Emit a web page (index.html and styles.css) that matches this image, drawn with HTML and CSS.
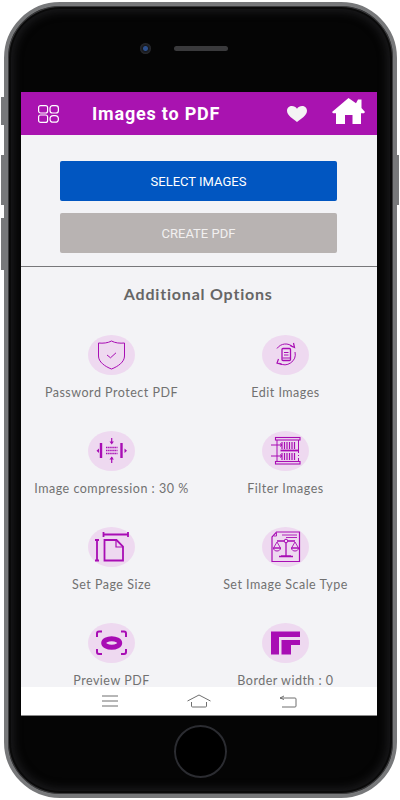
FILE: index.html
```html
<!DOCTYPE html>
<html lang="en">
<head>
  <meta charset="UTF-8" />
  <meta name="viewport" content="width=device-width, initial-scale=1.0" />
  <title>Images to PDF</title>
  <link rel="stylesheet" href="styles.css">
</head>
<body>
  <div class="phone">
    <span class="side-btn side-mute"></span>
    <span class="side-btn side-up"></span>
    <span class="side-btn side-down"></span>
    <span class="side-btn side-power"></span>

    <div class="top-bezel">
      <span class="camera"></span>
      <span class="speaker"></span>
    </div>

    <div class="screen">
      <header class="app-bar">
        <svg class="menu-icon" width="21" height="18" viewBox="0 0 21 18" fill="none" stroke="#fff" stroke-width="1.2">
          <rect x="0.6" y="0.6" width="9" height="7.4" rx="2"/>
          <rect x="12" y="0.6" width="8.4" height="7.4" rx="2.6"/>
          <rect x="0.6" y="10" width="9" height="7.4" rx="2"/>
          <rect x="12" y="10.6" width="8.4" height="6.6" rx="3.3"/>
        </svg>
        <h1 class="app-title">Images to PDF</h1>
        <svg class="heart-icon" width="20" height="16" viewBox="0 0 20 16"><path fill="#f4f4f4" d="M10 16C6 13 0 9.600 0 4.800 0 1.800 2.300 0 4.900 0 7 0 8.900 1 10 2.800 11.100 1 13 0 15.100 0 17.700 0 20 1.800 20 4.800 20 9.600 14 13 10 16Z"/></svg>
        <svg class="home-icon" width="33" height="26" viewBox="0 0 33 26"><path fill="#fff" d="M16.500 0 24 5.200 26 1.500H29.500V10L33 14 32 15.200H29V26H20.500V17H13V26H4V15.200H1L0 14Z"/></svg>
      </header>

      <main class="content">
        <button class="btn btn-blue" type="button">SELECT IMAGES</button>
        <button class="btn btn-grey" type="button">CREATE PDF</button>
        <hr class="divider">
        <h2 class="section-title">Additional Options</h2>

        <div class="options">
          <div class="option">
            <svg class="opt-icon" viewBox="0 0 47 40" fill="none" stroke="#a80db4" stroke-width="1">
              <path d="M10.500 8C15 8.500 20 8 23.500 6 27 8 32 8.500 36.500 8V21C36.500 27 30 31.500 23.500 34 17 31.500 10.500 27 10.500 21Z"/>
              <path d="M19 20l3.500 2.800 5.500-5"/>
            </svg>
            <span class="opt-label">Password Protect PDF</span>
          </div>
          <div class="option">
            <svg class="opt-icon" viewBox="0 0 47 40" fill="none" stroke="#a80db4" stroke-width="1">
              <path d="M15 13.500A10.500 10.500 0 0 1 31 12M33 17A10.500 10.500 0 0 1 17 28" stroke-dasharray="24 1.500"/>
              <path d="M28 10.500l4.500 2-1 -4.500M20 29.500l-5-1.500 1.500 -4" stroke-width="1.200"/>
              <rect x="20" y="13.500" width="8.500" height="12" rx="1" stroke-width="1.300"/>
              <path d="M22 17.500h4.500M22 20h4.500M20.500 23h7.500"/>
            </svg>
            <span class="opt-label">Edit Images</span>
          </div>
          <div class="option">
            <svg class="opt-icon" viewBox="0 0 47 40" fill="none" stroke="#a80db4" stroke-width="1">
              <path d="M23.700 7v5M23.700 26v6" stroke-width="1.200"/>
              <path fill="#a80db4" stroke="none" d="M21.500 10.500h4.400l-2.200 3ZM21.500 28.500h4.400l-2.200-3ZM11 17.500v4.400l-2.500-2.200ZM36.500 17.500v4.400l2.500-2.200Z"/>
              <path d="M13 12v15M33.500 12v15" stroke-width="2.400"/>
              <path d="M18 16.500h11.500M18 19.500h11.500M18 22.500h11.500" stroke-width="1.700" stroke-dasharray="1.500 .6"/>
            </svg>
            <span class="opt-label">Image compression : 30 %</span>
          </div>
          <div class="option">
            <svg class="opt-icon" viewBox="0 0 47 40" fill="none" stroke="#a80db4" stroke-width="1">
              <rect x="13.500" y="6.500" width="24.500" height="2.500" stroke-width="1.100"/>
              <rect x="13.500" y="30.500" width="24.500" height="2.500" stroke-width="1.100"/>
              <path d="M15 9v21.500M36.500 9v13M36.500 24v1M36.500 27v3.500"/>
              <path d="M18.500 19.500h18" stroke-width="1.800"/>
              <path d="M20 11v7M22.500 11v7M25 11v7M27.500 11v7M30 11v7M32.500 11v7M20 22v7M22.500 22v7M25 22v7M27.500 22v7M30 22v7M32.500 22v7" stroke-width="1.200"/>
              <path d="M9 14h10.500M9 25h10.500"/>
              <path d="M18 12.500l2 1.500-2 1.500M18 23.500l2 1.500-2 1.500"/>
            </svg>
            <span class="opt-label">Filter Images</span>
          </div>
          <div class="option">
            <svg class="opt-icon" viewBox="0 0 47 40" fill="none" stroke="#a80db4" stroke-width="1.800">
              <path d="M15.500 7.500h24.500M15.500 5v5M40 5v5"/>
              <path d="M9 13v20.500M7 13h4M7 33.500h4"/>
              <path d="M16.500 13h12l6.500 6.500v14h-18.500Z"/>
              <path d="M28 13v7h7" stroke-width="1.200"/>
            </svg>
            <span class="opt-label">Set Page Size</span>
          </div>
          <div class="option">
            <svg class="opt-icon" viewBox="0 0 47 40" fill="none" stroke="#a80db4" stroke-width="1">
              <path d="M14.500 5h23V34.500H10V10Z" stroke-width="1.200"/>
              <path d="M12 9h2.500V6M20 8h15M24 10.500h11" stroke-width=".9"/>
              <path d="M24 15v14M19 29h10M17 29.500h14M15 14h18" stroke-width="1.300"/>
              <circle cx="24" cy="14" r="1.800" fill="#eed9f0"/>
              <path d="M15 15l-3.500 6h7ZM33 15l-3.500 6h7Z" stroke-width=".9"/>
              <path d="M11.500 21c0 4 7 4 7 0ZM29.500 21c0 4 7 4 7 0Z" stroke-width="1"/>
            </svg>
            <span class="opt-label">Set Image Scale Type</span>
          </div>
          <div class="option">
            <svg class="opt-icon" viewBox="0 0 47 40" fill="none" stroke="#a80db4" stroke-width="2">
              <path d="M9 14v-3.500q0-2 2-2h3M33 8.500h3q2 0 2 2V14M38 26v3q0 2-2 2h-3M14 31h-3q-2 0-2-2v-3"/>
              <ellipse cx="23.700" cy="20" rx="8" ry="4.200" stroke-width="5"/>
            </svg>
            <span class="opt-label">Preview PDF</span>
          </div>
          <div class="option">
            <svg class="opt-icon" viewBox="0 0 47 40">
              <path fill="#a80db4" d="M9 8.500H38V14H17V31.500H9ZM19.500 17H38V22H29V31.500H19.500Z"/>
            </svg>
            <span class="opt-label">Border width : 0</span>
          </div>
        </div>
      </main>

      <nav class="nav-bar">
        <svg width="18" height="12" viewBox="0 0 18 12" fill="none" stroke="#6f6f6f" stroke-width="1"><path d="M1 1h16M1 6h16M1 11h16"/></svg>
        <svg width="24" height="14" viewBox="0 0 24 14" fill="none" stroke="#6f6f6f" stroke-width="1"><path d="M.5 7 12 1 23.500 7M4.500 8v4q0 1 1 1h13q1 0 1-1V8"/></svg>
        <svg width="18" height="13" viewBox="0 0 18 13" fill="none" stroke="#6f6f6f" stroke-width="1"><path d="M1 3h15q1 0 1 1v7q0 1-1 1H3M5 1 1 3l4 1.500"/></svg>
      </nav>
    </div>

    <div class="bottom-bezel">
      <span class="home-btn"></span>
    </div>
  </div>
</body>
</html>
```

FILE: styles.css
```css
* {
  box-sizing: border-box;
}

body {
  margin: 0;
  background: #fff;
  overflow: hidden;
  font-family: Lato, sans-serif;
}

/* device frame */
.phone {
  position: relative;
  display: flex;
  flex-direction: column;
  align-items: center;
  width: 393px;
  height: 796px;
  margin: 2px 3px 2px 4px;
  background: #050505;
  border: 4px solid #77787a;
  border-radius: 56px;
  box-shadow: inset 0 0 0 1px #3a3a3c, inset 0 0 0 3px #0a0a0a, inset 0 0 8px 6px #1a1a1c;
}

.side-btn {
  position: absolute;
  width: 3px;
  background: #77787a;
}

.side-mute { left: -7px; top: 91px; height: 28px; }
.side-up { left: -7px; top: 149px; height: 50px; }
.side-down { left: -7px; top: 212px; height: 52px; }
.side-power { right: -6px; top: 149px; height: 50px; }

.top-bezel {
  flex: none;
  display: flex;
  justify-content: center;
  align-items: center;
  gap: 23px;
  width: 100%;
  height: 86px;
  padding: 0 33px 1px 0;
}

.camera {
  width: 11px;
  height: 11px;
  border-radius: 50%;
  background: radial-gradient(circle, #2c4f8c 0 2px, #16181d 3px, #2b2c30 5.500px);
}

.speaker {
  width: 54px;
  height: 5px;
  border-radius: 3px;
  background: #3a3a3c;
}

/* app screen */
.screen {
  flex: none;
  display: flex;
  flex-direction: column;
  width: 356.500px;
  height: 624px;
  margin-right: 3.500px;
  background: #f3f3f6;
}

.app-bar {
  flex: none;
  display: flex;
  align-items: center;
  height: 43px;
  padding-left: 17.500px;
  background: #a913b0;
}

.app-title {
  margin: 0 0 0 33px;
  font-family: Roboto, sans-serif;
  font-size: 18px;
  font-weight: 700;
  letter-spacing: 0.8px;
  white-space: nowrap;
  color: #fff;
}

.heart-icon {
  margin-left: auto;
}

.home-icon {
  margin: -5px 12px 0 25px;
}

.content {
  flex: 1;
  min-height: 0;
  overflow: hidden;
  padding-top: 26px;
}

.btn {
  display: block;
  width: 277px;
  height: 40px;
  margin: 0 auto 12px 39.500px;
  border: none;
  border-radius: 2px;
  font-family: Roboto, sans-serif;
  font-size: 13px;
  color: #fff;
}

.btn-blue {
  background: #0156c1;
}

.btn-grey {
  background: #b8b3b2;
  color: #f2f0f0;
}

.divider {
  height: 1px;
  margin: 13px 0 0;
  border: none;
  background: #77777a;
}

.section-title {
  margin: 17px 0 0;
  padding-right: 1px;
  text-align: center;
  font-size: 16px;
  line-height: 20px;
  font-weight: 700;
  letter-spacing: 0.8px;
  color: #666;
}

.options {
  display: grid;
  grid-template-columns: 174px 174px;
  grid-auto-rows: 96px;
  padding: 31px 0 0 4px;
}

.option {
  display: flex;
  flex-direction: column;
  align-items: center;
}

.opt-icon {
  width: 47px;
  height: 40px;
  overflow: visible;
  border-radius: 50%;
  background: #eed9f0;
}

.opt-label {
  margin-top: 10px;
  font-size: 12.500px;
  line-height: 16px;
  letter-spacing: 0.5px;
  white-space: nowrap;
  color: #717171;
}

.nav-bar {
  flex: none;
  display: flex;
  justify-content: space-between;
  align-items: center;
  height: 29px;
  padding: 0 80px;
  background: #fff;
  border-bottom: 1px solid #8a8a8a;
}

.bottom-bezel {
  flex: 1;
  display: flex;
  justify-content: center;
  align-items: center;
  width: 100%;
  padding: 0 0 8px;
}

.home-btn {
  width: 53px;
  height: 53px;
  border: 2px solid #2b2c31;
  border-radius: 50%;
  background: #000;
}
```
